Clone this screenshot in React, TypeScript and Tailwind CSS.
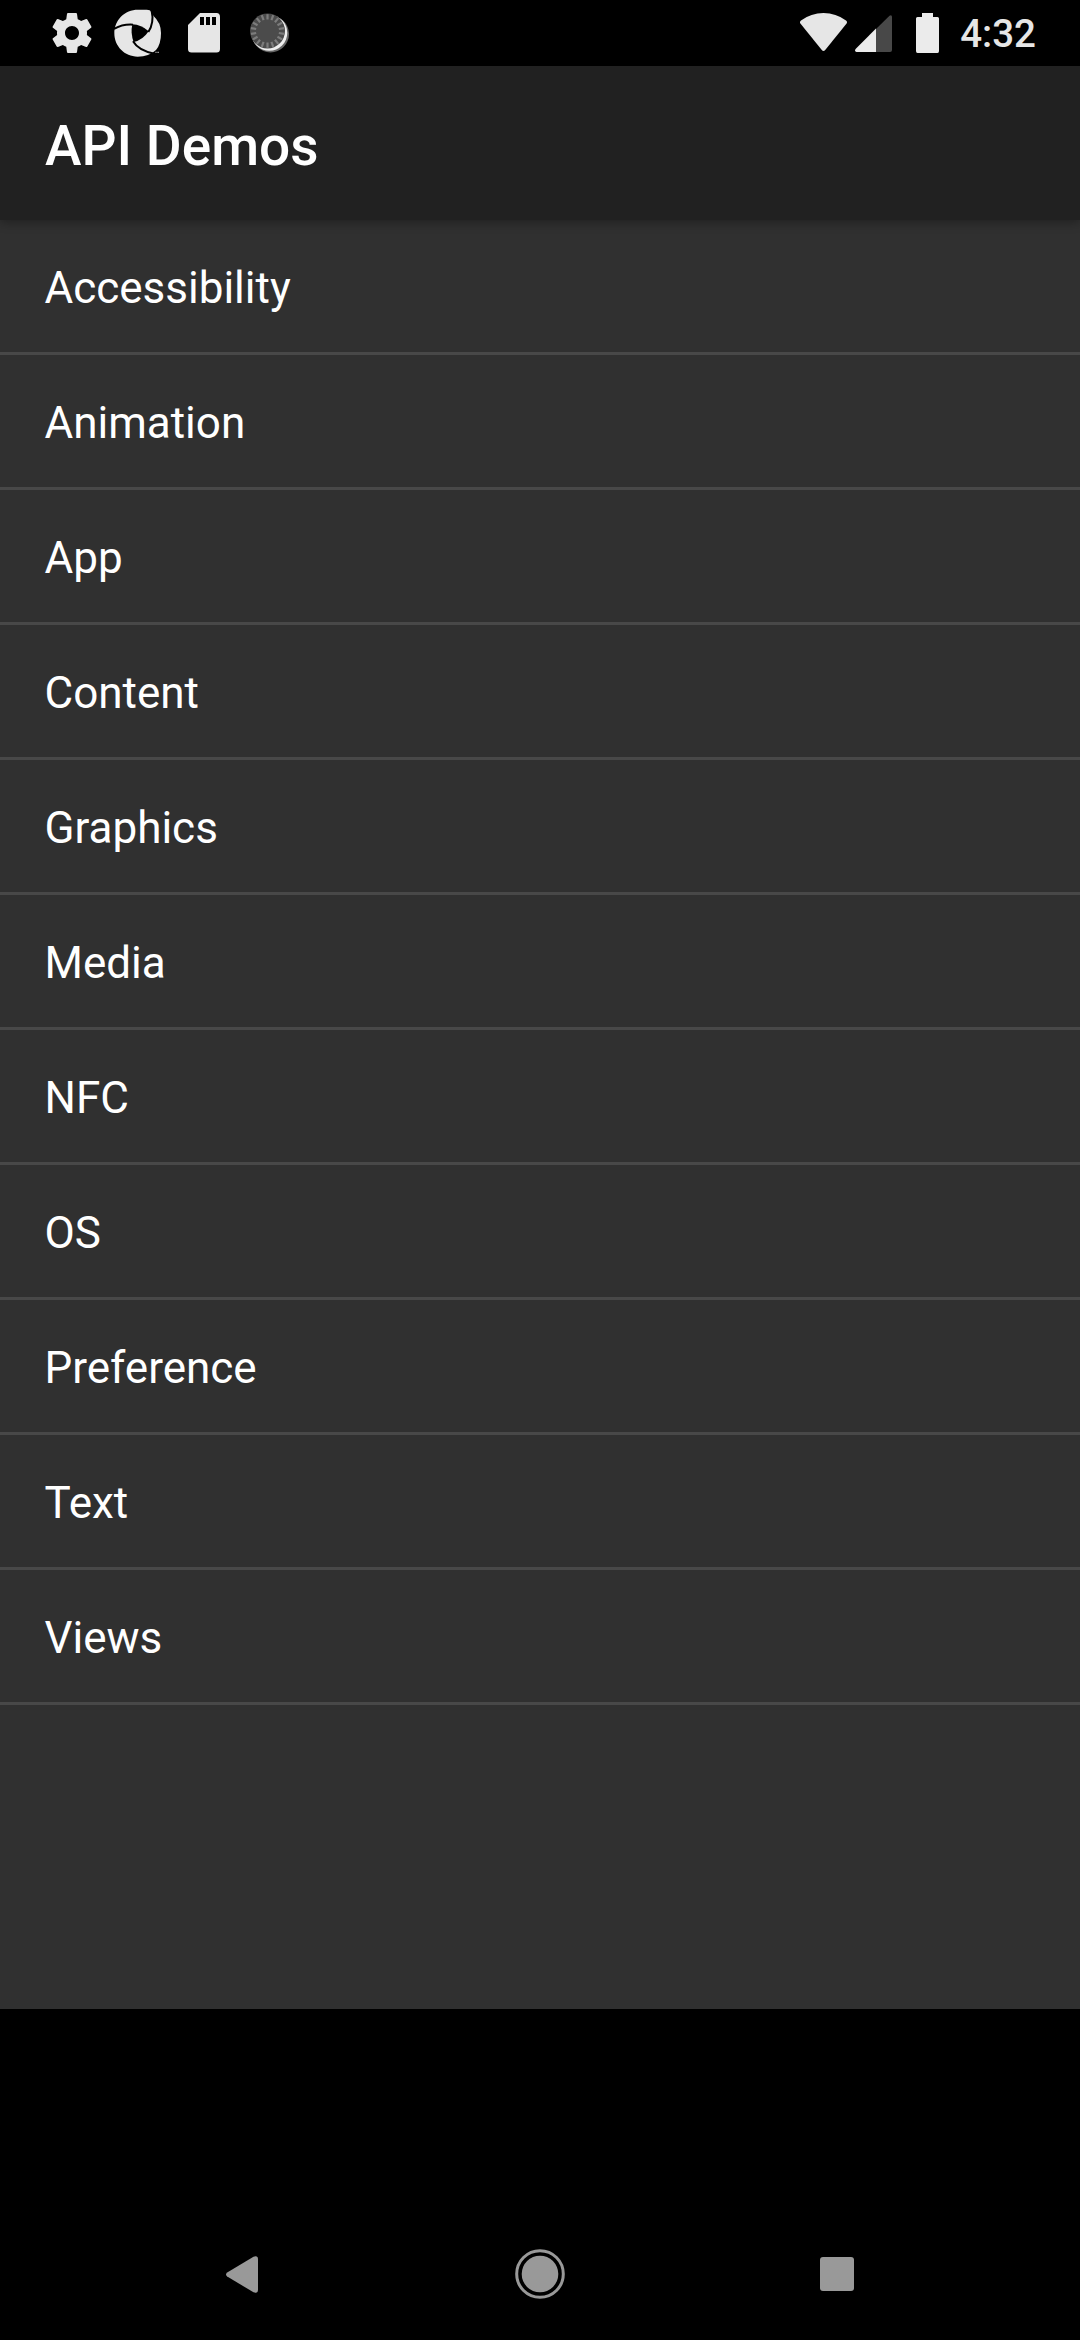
const demos = [
  'Accessibility',
  'Animation',
  'App',
  'Content',
  'Graphics',
  'Media',
  'NFC',
  'OS',
  'Preference',
  'Text',
  'Views',
];

const ticks = Array.from({ length: 18 }, (_, i) => i * 20);

function GearIcon() {
  return (
    <svg viewBox="0 0 24 24" className="size-12 shrink-0" fill="#e6e6e6">
      <path d="M19.43 12.98c.04-.32.07-.64.07-.98s-.03-.66-.07-.98l2.11-1.65c.19-.15.24-.42.12-.64l-2-3.46c-.12-.22-.39-.3-.61-.22l-2.49 1c-.52-.4-1.08-.73-1.69-.98l-.38-2.65C14.46 2.18 14.25 2 14 2h-4c-.25 0-.46.18-.49.42l-.38 2.65c-.61.25-1.17.59-1.69.98l-2.49-1c-.23-.09-.49 0-.61.22l-2 3.46c-.13.22-.07.49.12.64l2.11 1.65c-.04.32-.07.65-.07.98s.03.66.07.98l-2.11 1.65c-.19.15-.24.42-.12.64l2 3.46c.12.22.39.3.61.22l2.49-1c.52.4 1.08.73 1.69.98l.38 2.65c.03.24.24.42.49.42h4c.25 0 .46-.18.49-.42l.38-2.65c.61-.25 1.17-.59 1.69-.98l2.49 1c.23.09.49 0 .61-.22l2-3.46c.12-.22.07-.49-.12-.64l-2.11-1.65zM12 15.5c-1.93 0-3.5-1.57-3.5-3.5s1.57-3.5 3.5-3.5 3.5 1.57 3.5 3.5-1.57 3.5-3.5 3.5z" />
    </svg>
  );
}

function ApertureIcon() {
  return (
    <svg viewBox="0 -1 144 144" className="size-12 shrink-0">
      <path
        d="M72 1H98Q109 1 111 7L115 12L118 19Q141 40 141 71Q141 105 126 122Q105 142 71 142C32 142 1 111 1 72C1 32 32 1 72 1Z"
        fill="#e6e6e6"
      />
      <path d="M55 45Q82 46 104 66Q86 93 59 98Q49 72 55 45Z" fill="#000" />
      <g fill="none" stroke="#000" strokeWidth="6">
        <path d="M0 59Q25 44 57 46" />
        <path d="M103 68Q121 40 113 4" />
        <path d="M57 96Q74 125 124 134" />
      </g>
      <path d="M124 127h4v4h-4zM130 127h5v4h-5z" fill="#999" />
    </svg>
  );
}

function SdCardIcon() {
  return (
    <svg viewBox="0 0 32 40" className="ml-[26px] h-10 w-8 shrink-0">
      <path d="M12 0H28.500Q32 0 32 4V36Q32 39.500 28.500 39.500H3.500Q0 39.500 0 36V12Z" fill="#e6e6e6" />
      <path d="M12 4h4v8h-4zM18 4h4v8h-4zM24 4h4v8h-4z" fill="#000" />
    </svg>
  );
}

function SpinnerIcon() {
  return (
    <svg viewBox="0 0 40 40" className="ml-[30px] size-10 shrink-0">
      <circle cx="20.500" cy="21" r="18.500" fill="#666" />
      <circle cx="19.300" cy="19.800" r="18" fill="#eee" />
      <circle cx="17.500" cy="18" r="17.500" fill="#4b4b4b" />
      <g stroke="#7c7c7c" strokeWidth="2.200">
        {ticks.map((a) => (
          <path key={a} d="M17.500 1.200V6.500" transform={`rotate(${a} 17.500 18)`} />
        ))}
      </g>
    </svg>
  );
}

function WifiIcon() {
  return (
    <svg viewBox="0 0 48 40" className="h-10 w-12 shrink-0" fill="#e6e6e6">
      <path d="M.600 10.800Q-.800 9 1 7.500Q11 0 23.500 0T46 7.500Q47.800 9 46.400 10.800L25.200 37Q23.500 39 21.800 37Z" />
    </svg>
  );
}

function SignalIcon() {
  return (
    <svg viewBox="0 0 37 37" className="ml-[7px] mt-[1px] size-[37px] shrink-0">
      <path d="M21 14L34.500 .700Q37 -.500 37 2V35Q37 37 35 37H21Z" fill="#484848" />
      <path d="M21 13.500V37H1.500Q-.800 36.500 .600 34Z" fill="#ebebeb" />
    </svg>
  );
}

function BatteryIcon() {
  return (
    <svg viewBox="0 0 23 40" className="ml-6 h-10 w-[23px] shrink-0">
      <path d="M6 0H17V4H21.500Q23 4 23 5.500V38Q23 40 21.500 40H1.500Q0 40 0 38V5.500Q0 4 1.500 4H6Z" fill="#ebebeb" />
    </svg>
  );
}

export default function App() {
  return (
    <div className="flex h-[2340px] w-[1080px] flex-col overflow-hidden bg-black font-['Roboto',sans-serif] text-white">
      <div className="flex h-[66px] shrink-0 items-center justify-between pl-12 pr-11">
        <div className="flex items-center">
          <GearIcon />
          <div className="ml-[18px] flex">
            <ApertureIcon />
          </div>
          <SdCardIcon />
          <SpinnerIcon />
        </div>
        <div className="flex items-center">
          <WifiIcon />
          <SignalIcon />
          <BatteryIcon />
          <span className="ml-[21px] mt-[2px] text-[38.5px] font-medium leading-none text-[#e6e6e6]">4:32</span>
        </div>
      </div>

      <header className="relative flex h-[154px] shrink-0 items-center bg-[#212121] px-[45px] shadow-[0_2px_10px_rgba(0,0,0,0.35)]">
        <h1 className="mt-1.5 text-[55px] font-medium leading-none">API Demos</h1>
      </header>

      <main className="h-[1789px] shrink-0 bg-[#303030]">
        <ul>
          {demos.map((name) => (
            <li
              key={name}
              className="flex h-[135px] items-center border-b-[3px] border-[#484848] px-[44.5px] text-[44px] leading-none"
            >
              <span className="mt-1">{name}</span>
            </li>
          ))}
        </ul>
      </main>

      <nav className="mt-auto flex h-[132px] items-center justify-between px-[226px]">
        <svg viewBox="0 0 34 37" className="h-[37px] w-[34px]" fill="#999">
          <path d="M1.200 16.500L27.500 .700Q32 -1 32 3.500V33.500Q32 38 27.500 36.300L1.200 20.500Q-1.200 18.500 1.200 16.500Z" />
        </svg>
        <svg viewBox="0 0 50 50" className="size-[50px]">
          <circle cx="25" cy="25" r="23.300" fill="none" stroke="#999" strokeWidth="3" />
          <circle cx="25" cy="25" r="18.300" fill="#999" />
        </svg>
        <div className="size-[34px] rounded-[3px] bg-[#999]" />
      </nav>
    </div>
  );
}
